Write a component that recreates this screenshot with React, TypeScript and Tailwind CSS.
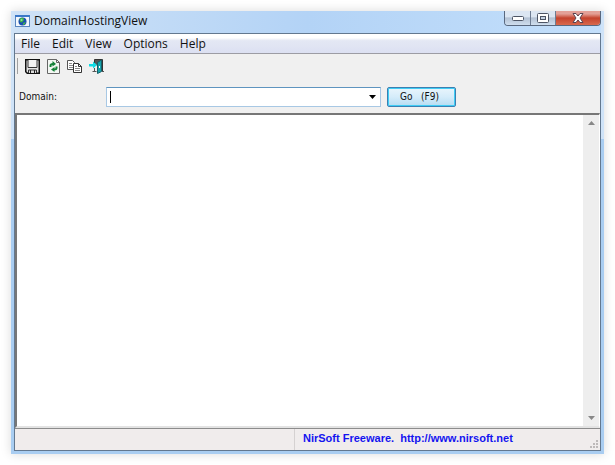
const menus = ["File", "Edit", "View", "Options", "Help"];

function AppIcon() {
  return (
    <svg width="15" height="12" viewBox="0 0 15 12" aria-hidden="true">
      <rect x="0.5" y="0.5" width="14" height="11" fill="#f4f8fc" stroke="#5a86c0" />
      <rect x="0" y="0" width="15" height="2" fill="#3b78c8" />
      <circle cx="7.5" cy="6.5" r="4" fill="#1a4fb0" />
      <path d="M4.500 4q2-2 4-1l.5 2-2 2.500-2-.5zM8 8l2.500-1-.5 2-2 1z" fill="#3fb54a" />
      <circle cx="6.500" cy="5" r="1" fill="#8fe0a0" />
    </svg>
  );
}

function SaveIcon() {
  return (
    <svg width="15" height="15" viewBox="0 0 15 15" aria-hidden="true">
      <path d="M.75.75h13.500v13.500H2.250L.75 12.750z" fill="#e4e4e4" stroke="#111" strokeWidth="1.500" />
      <path d="M3 1v7.500h9V1" fill="#f2f2f2" stroke="#333" />
      <path d="M3.500 14v-3h8v3" fill="#ddd" stroke="#333" />
      <path d="M5.500 11v3M9.500 11v3" stroke="#222" />
    </svg>
  );
}

function RefreshIcon() {
  return (
    <svg width="13" height="15" viewBox="0 0 13 15" aria-hidden="true">
      <path d="M.5.5h9l3 3v11H.5z" fill="#f4f8f4" stroke="#666" />
      <path d="M9.500.5v3h3" fill="none" stroke="#666" />
      <path d="M3.500 8V6.500Q3.500 5 6 5" fill="none" stroke="#148238" strokeWidth="2" />
      <path d="M5.500 2L9 5 5.500 7.500z" fill="#148238" />
      <path d="M9.500 7.500V9q0 1.500-2.500 1.500" fill="none" stroke="#148238" strokeWidth="2" />
      <path d="M7.500 8L4 10.500 7.500 13z" fill="#148238" />
    </svg>
  );
}

function CopyIcon() {
  return (
    <svg width="15" height="13" viewBox="0 0 15 13" aria-hidden="true">
      <path d="M.5.5h5l2 2v7h-7z" fill="#fff" stroke="#555" />
      <path d="M2 3.500h3M2 5.500h4M2 7.500h4" stroke="#888" />
      <path d="M6.500 3.500h5l3 3v6h-8z" fill="#fff" stroke="#333" />
      <path d="M11.500 3.500v3h3" fill="none" stroke="#333" />
      <path d="M8 6.500h2M8 8.500h5M8 10.500h5" stroke="#888" />
    </svg>
  );
}

function ExitIcon() {
  return (
    <svg width="15" height="15" viewBox="0 0 15 15" aria-hidden="true">
      <path d="M5.500 4V.5h8V13" fill="#555" stroke="#333" />
      <path d="M5.500 9v3.500M3.500 12.500h4M13 12.500h2" fill="none" stroke="#555" />
      <path d="M8.500 3.500l4-2.500v11.500l-4 2z" fill="#16a3ac" stroke="#155f68" />
      <rect x="10" y="7" width="1" height="2" fill="#fff" />
      <path d="M0 5h4V2.500l4 3.500-4 3.500V7.500H0z" fill="#10dbe4" />
    </svg>
  );
}

const tools = [
  { label: "Save", icon: <SaveIcon /> },
  { label: "Refresh", icon: <RefreshIcon /> },
  { label: "Copy", icon: <CopyIcon /> },
  { label: "Exit", icon: <ExitIcon /> },
];

function TitleBar() {
  return (
    <header className="flex h-[22px] items-start justify-between bg-linear-to-r from-[#cfe2f6] via-[#b3d3f6] to-[#c3dffb]">
      <div className="flex h-5 items-center gap-1 pl-px">
        <AppIcon />
        <h1 className="text-xs">DomainHostingView</h1>
      </div>
      <div className="flex h-[15px] overflow-hidden rounded-b-[4px] border border-t-0 border-[#59687e]">
        <button
          aria-label="Minimize"
          className="flex w-[26px] items-center justify-center border-r border-[#6d7c92] bg-linear-to-b from-[#dce6f2] from-40% via-[#b4c2d4] via-50% to-[#cfdeee]"
        >
          <svg width="12" height="5" viewBox="0 0 12 5" aria-hidden="true">
            <rect x=".5" y=".5" width="11" height="4" rx="1" fill="#fff" stroke="#4d5565" />
          </svg>
        </button>
        <button
          aria-label="Maximize"
          className="flex w-[25px] items-center justify-center border-r border-[#6d7c92] bg-linear-to-b from-[#dce6f2] from-40% via-[#b4c2d4] via-50% to-[#cfdeee]"
        >
          <svg width="12" height="10" viewBox="0 0 12 10" aria-hidden="true">
            <rect x=".5" y=".5" width="11" height="9" rx="1" fill="#fff" stroke="#4d5565" />
            <rect x="3.500" y="3.500" width="5" height="3" fill="#c5d2e2" stroke="#4d5565" />
          </svg>
        </button>
        <button
          aria-label="Close"
          className="flex w-[44px] items-center justify-center bg-linear-to-b from-[#e3a097] from-20% via-[#c4422d] via-50% to-[#d9694d]"
        >
          <svg width="12" height="10" viewBox="0 0 12 10" aria-hidden="true">
            <path
              d="M1 .5h3l2 2.500L8 .5h3L8 5l3 4.500H8L6 7 4 9.500H1L4 5z"
              fill="#fff"
              stroke="#5b4450"
            />
          </svg>
        </button>
      </div>
    </header>
  );
}

function MenuBar() {
  return (
    <nav className="flex h-5 items-center gap-3 border-b border-[#9c9ca4] bg-linear-to-b from-white from-20% via-[#e4e8f4] via-35% to-[#dce0f2] pl-1.5">
      {menus.map((menu) => (
        <button key={menu} className="text-xs">
          {menu}
        </button>
      ))}
    </nav>
  );
}

function DomainForm() {
  return (
    <form
      className="flex h-[35px] items-center pt-0.5 pl-1 font-['DejaVu_Sans_Condensed','DejaVu_Sans',sans-serif] text-[10px]"
      onSubmit={(e) => e.preventDefault()}
    >
      <label htmlFor="domain" className="w-[87px]">
        Domain:
      </label>
      <div className="flex h-5 w-[275px] items-center border border-[#a8c8e4] border-t-[#5e94bf] bg-white pl-[3px]">
        <span className="h-3 w-px bg-black" />
        <input id="domain" type="text" className="h-full min-w-0 flex-1 text-xs caret-transparent outline-none" />
        <button type="button" aria-label="Show domains" className="flex h-full w-[15px] items-center justify-center">
          <svg width="7" height="4" viewBox="0 0 7 4" aria-hidden="true">
            <path d="M0 0h7L3.500 4z" fill="#000" />
          </svg>
        </button>
      </div>
      <button
        type="submit"
        className="ml-1.5 h-5 w-[69px] rounded-[2px] border border-[#3c7fb1] bg-linear-to-b from-[#e9f5fc] via-[#d5ecfa] to-[#b5dcf2] pr-1 whitespace-pre inset-ring inset-ring-[#3fcdf5]"
      >
        {"Go   (F9)"}
      </button>
    </form>
  );
}

function Results() {
  return (
    <main className="flex flex-1 border-t-2 border-r border-b-2 border-l-2 border-t-[#777777] border-r-white border-b-[#e3e3e3] border-l-[#777777] bg-white">
      <div className="flex-1" />
      <div className="flex w-4 flex-col items-center justify-between bg-[#eeeeee] py-1.5">
        <button aria-label="Scroll up">
          <svg width="7" height="4" viewBox="0 0 7 4" aria-hidden="true">
            <path d="M0 4h7L3.500 0z" fill="#888" />
          </svg>
        </button>
        <button aria-label="Scroll down">
          <svg width="7" height="4" viewBox="0 0 7 4" aria-hidden="true">
            <path d="M0 0h7L3.500 4z" fill="#888" />
          </svg>
        </button>
      </div>
    </main>
  );
}

function StatusBar() {
  return (
    <footer className="flex h-[22px] items-stretch border-t border-[#8c8c8c] bg-[#f0ecec]">
      <div className="w-[280px] border-r border-[#d5d1d1]" />
      <div className="flex flex-1 items-center pb-0.5 pl-2">
        <a
          href="http://www.nirsoft.net"
          className="font-['Liberation_Sans',sans-serif] text-[11px] font-bold whitespace-pre text-[#1414f0]"
        >
          {"NirSoft Freeware.  http://www.nirsoft.net"}
        </a>
      </div>
      <svg width="11" height="11" viewBox="0 0 11 11" className="self-end" aria-hidden="true">
        <path d="M7 1h2v2H7zM4 4h2v2H4zM7 4h2v2H7zM1 7h2v2H1zM4 7h2v2H4zM7 7h2v2H7z" fill="#bdb9b9" />
      </svg>
    </footer>
  );
}

export default function App() {
  return (
    <div className="flex min-h-screen bg-white p-[11px] font-['Open_Sans',sans-serif] text-[#111111]">
      <div className="flex flex-1 flex-col bg-linear-to-b from-[#cfe3f8] from-29% to-[#a9cdf1] to-29% px-[3px] pb-[3px] shadow-[0_0_10px_rgba(0,0,0,0.15)]">
        <TitleBar />
        <div className="flex flex-1 flex-col border border-[#63788f] bg-[#f0f0f0]">
          <MenuBar />
          <div role="toolbar" aria-label="Main" className="flex h-6 items-center gap-[7px] pl-0.5">
            <div className="h-4 w-px bg-[#a0a0a0]" />
            {tools.map((tool) => (
              <button key={tool.label} aria-label={tool.label}>
                {tool.icon}
              </button>
            ))}
          </div>
          <DomainForm />
          <Results />
          <StatusBar />
        </div>
      </div>
    </div>
  );
}
